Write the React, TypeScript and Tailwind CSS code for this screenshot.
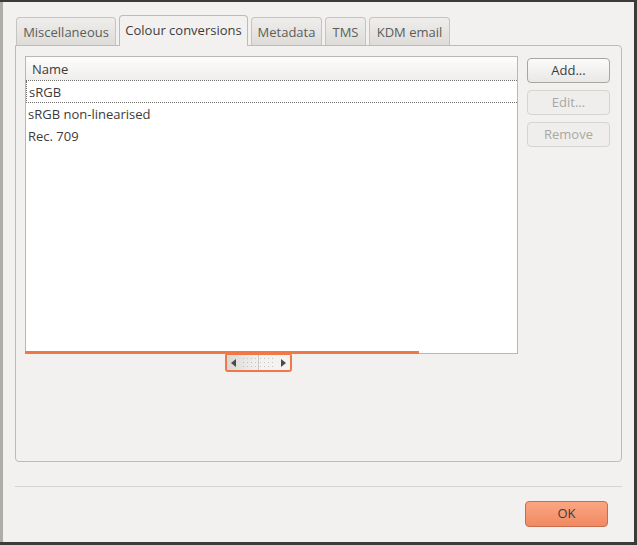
import React from "react";

const tabs = [
  { label: "Miscellaneous", w: "w-[100px]" },
  { label: "Colour conversions", w: "w-[129px]", active: true },
  { label: "Metadata", w: "w-[71px]" },
  { label: "TMS", w: "w-[41px]" },
  { label: "KDM email", w: "w-[81px]" },
];

const rows = ["sRGB", "sRGB non-linearised", "Rec. 709"];

const Btn: React.FC<{ label: string; disabled?: boolean }> = ({ label, disabled }) => (
  <div
    className={`h-[25px] w-[83px] rounded-[4px] border flex items-center justify-center text-[13px] ${
      disabled
        ? "border-[#d6d4d0] bg-[#f0eeec] text-[#a9a7a3]"
        : "border-[#a8a6a2] bg-gradient-to-b from-[#fbfbfa] to-[#e9e8e5] text-[#3c3c3c]"
    }`}
  >
    {label}
  </div>
);

export default function App() {
  return (
    <div
      className="w-[637px] h-[545px] bg-[#3c3b37] pt-[2px] pr-[4px] pb-[3px] overflow-hidden"
      style={{ fontFamily: "'Open Sans', 'DejaVu Sans', sans-serif" }}
    >
      <div className="flex h-full">
        <div className="w-[3px] bg-[#aeada8] shrink-0" />
        <div className="flex-1 bg-[#f2f1f0] flex flex-col pl-[12px] pr-[12px] pt-[13px]">
          {/* tabs */}
          <div className="flex items-end gap-[3px] pl-[1px] h-[30px] relative z-10">
            {tabs.map((t) =>
              t.active ? (
                <div
                  key={t.label}
                  className={`${t.w} h-[31px] -mb-[1px] rounded-t-[4px] border border-b-0 border-[#bdbbb7] bg-[#f2f1f0] flex items-center justify-center text-[13px] text-[#3c3c3c]`}
                >
                  {t.label}
                </div>
              ) : (
                <div
                  key={t.label}
                  className={`${t.w} h-[28px] rounded-t-[4px] border border-b-0 border-[#c6c4c0] bg-gradient-to-b from-[#efeeec] to-[#dddcd9] flex items-center justify-center text-[13px] text-[#5d5d5b] pt-[2px]`}
                >
                  {t.label}
                </div>
              )
            )}
          </div>
          {/* panel */}
          <div className="w-[607px] h-[417px] border border-[#bdbbb7] rounded-b-[4px] rounded-tr-[4px] flex pl-[9px] pt-[10px] pr-[10px]">
            <div className="flex flex-col">
              <div className="w-[493px] h-[298px] bg-white border border-[#b9b7b3] flex flex-col relative">
                <div className="h-[24px] bg-gradient-to-b from-[#fdfdfd] to-[#efeeec] border-b border-dotted border-[#6f6e6b] flex items-center pl-[6px] pt-[2px] text-[13px] text-[#3c3c3c]">
                  Name
                </div>
                {rows.map((r, i) => (
                  <div
                    key={r}
                    className={`h-[22px] flex items-center pl-[2px] pt-[2px] text-[13px] text-[#3c3c3c] ${
                      i === 0 ? "border-b border-l border-dotted border-[#6f6e6b]" : ""
                    }`}
                  >
                    {r}
                  </div>
                ))}
                <div className="absolute left-[-1px] bottom-[-1px] w-[394px] h-[3px] bg-[#f07746]" />
              </div>
              {/* scroller */}
              <div className="ml-[200px] -mt-[1px] w-[67px] h-[19px] border-2 border-[#f07746] rounded-[3px] flex bg-[#e8e7e5]">
                <div className="flex-1 flex items-center pl-[4px] bg-gradient-to-r from-[#d9d8d6] to-[#f2f1f0] border-r border-[#c8c7c4]">
                  <svg width="5" height="8" viewBox="0 0 5 8">
                    <path d="M5 0 L0 4 L5 8 Z" fill="#4a4a48" />
                  </svg>
                  <svg className="ml-[7px]" width="14" height="12" viewBox="0 0 14 12">
                    {[0, 4, 8, 12].map((x) =>
                      [1, 5, 9].map((y) => <rect key={`${x}-${y}`} x={x} y={y} width="1" height="1" fill="#c4c3c0" />)
                    )}
                  </svg>
                </div>
                <div className="flex-1 flex items-center justify-end pr-[4px] bg-[#f4f3f2]">
                  <svg className="mr-[7px]" width="14" height="12" viewBox="0 0 14 12">
                    {[0, 4, 8, 12].map((x) =>
                      [1, 5, 9].map((y) => <rect key={`${x}-${y}`} x={x} y={y} width="1" height="1" fill="#c4c3c0" />)
                    )}
                  </svg>
                  <svg width="5" height="8" viewBox="0 0 5 8">
                    <path d="M0 0 L5 4 L0 8 Z" fill="#4a4a48" />
                  </svg>
                </div>
              </div>
            </div>
            <div className="ml-[9px] pt-[2px] flex flex-col gap-[7px]">
              <Btn label="Add..." />
              <Btn label="Edit..." disabled />
              <Btn label="Remove" disabled />
            </div>
          </div>
          <div className="mt-[24px] w-[607px] h-px bg-[#d6d4d0]" />
          <div className="flex justify-end pr-[14px] pt-[14px]">
            <div className="w-[83px] h-[26px] rounded-[4px] border border-[#c86c4a] bg-gradient-to-b from-[#fba583] to-[#f08a63] flex items-center justify-center text-[13px] text-[#3c3c3c]">
              OK
            </div>
          </div>
        </div>
      </div>
    </div>
  );
}
